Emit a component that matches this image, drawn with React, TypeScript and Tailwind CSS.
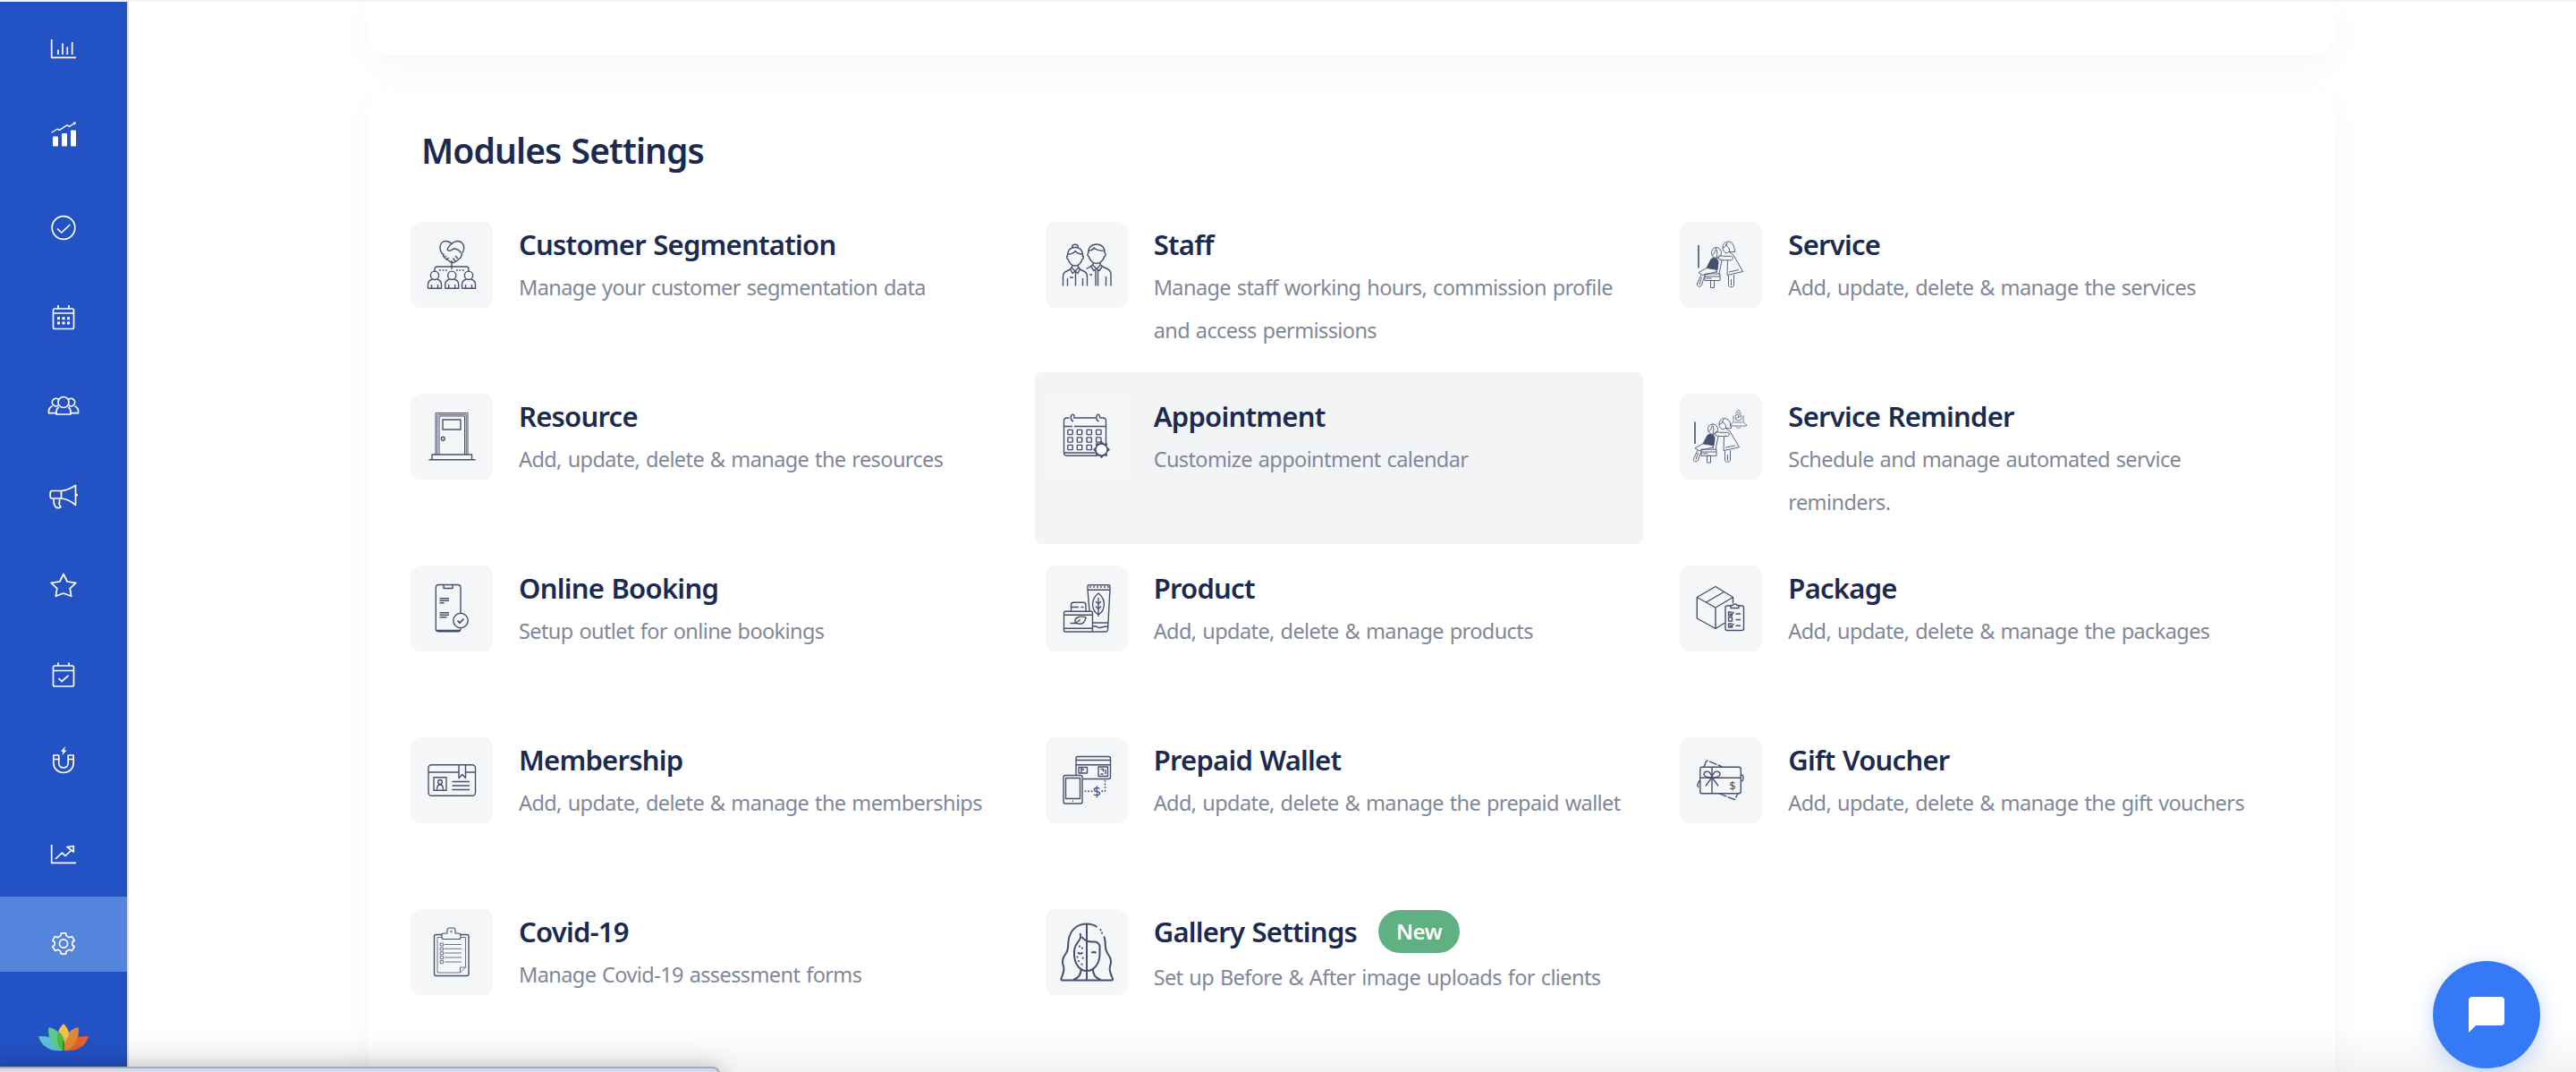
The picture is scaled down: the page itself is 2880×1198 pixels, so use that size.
import { type ReactNode } from "react";

interface ModuleItem {
  title: string;
  description: string;
  icon: ReactNode;
  badge?: string;
  active?: boolean;
}

interface NavItem {
  name: string;
  icon: ReactNode;
  active?: boolean;
}

const navItems: NavItem[] = [
  {
    name: "dashboard",
    icon: <path d="M4.7 7v20.3H32M12 24v-5.5M17 24V11.5M22.3 24v-8.5M27.7 24V10" />,
  },
  {
    name: "growth",
    icon: (
      <>
        <g fill="currentColor" stroke="none">
          <rect x="6" y="15.5" width="6" height="11" rx="0.8" />
          <rect x="16" y="12" width="6" height="14.5" rx="0.8" />
          <rect x="26" y="8.5" width="6" height="18" rx="0.8" />
          <path d="M28.5-.5h3.7l-1.5 3.2z" />
        </g>
        <path d="M4.5 11.2l6.5-4 2.5 1.2 8.5-5.5 2.5 1.5L30 1" strokeWidth="1.3" />
      </>
    ),
  },
  {
    name: "tasks",
    icon: (
      <>
        <circle cx="18" cy="17.5" r="12.8" />
        <path d="M11 18.5l4.8 4.5 9.5-9" />
      </>
    ),
  },
  {
    name: "calendar",
    icon: (
      <>
        <rect x="6.5" y="8" width="23" height="22.5" rx="1.8" />
        <path d="M6.5 13h23M12 4v4M24 4v4" />
        <path
          d="M11 17.2h3v3h-3zM16.5 17.2h3v3h-3zM22 17.2h3v3h-3zM11 22.6h3v3h-3zM16.5 22.6h3v3h-3zM22 22.6h3v3h-3z"
          fill="currentColor"
          stroke="none"
        />
      </>
    ),
  },
  {
    name: "clients",
    icon: (
      <>
        <circle cx="18" cy="12.5" r="6" />
        <path d="M12.8 18.2c-1.7.6-2.7 2.3-2.7 4.5V26h15.8v-3.3c0-2.2-1-3.9-2.7-4.5" />
        <path d="M12.2 16a4.3 4.3 0 1 1 .6-6.4M5.5 16.7c-2.5 1.2-4 3.5-4 6v2h8.6M23.8 16a4.3 4.3 0 1 0-.6-6.4M30.5 16.7c2.5 1.2 4 3.5 4 6v2h-8.6" />
      </>
    ),
  },
  {
    name: "marketing",
    icon: (
      <>
        <path d="M15.5 11.5H5.3c-1.300 0-2.100 1-2.100 2.500v3.700c0 1.500.8 2.300 2.100 2.300h10.200z" />
        <path d="M15.5 11.5c5.500 0 11-3 16-6v22c-5-4.500-10.500-7-16-7.500M31.500 14.700l1.800 1.400-1.800 1.600" />
        <path d="M7.2 20.5c-.4 4 .3 7 1.800 8.800 1.500 1.400 4.200 1.500 6 .3-2-2.200-2.200-4-1.500-6v-3.300" />
      </>
    ),
  },
  {
    name: "reviews",
    icon: <path d="M18 4.5l4.200 8.500 9.600 1.300-6.600 6.300 1.500 8.700-8.700-3.300-8.700 3.300 1.500-8.700-6.600-6.300L13.800 13z" />,
  },
  {
    name: "bookings",
    icon: (
      <>
        <rect x="6.5" y="7" width="23" height="23" rx="1.8" />
        <path d="M6.5 12.500h23M12 3.500V7M24 3.500V7M12.500 21l3.500 3.500 7.500-6.500" />
      </>
    ),
  },
  {
    name: "leads",
    icon: (
      <>
        <path d="M6.8 7h6v8.800c0 3.200 2.300 5.200 5.200 5.200s5.200-2 5.200-5.200V7h6v8.800c0 6-5 10.700-11.200 10.700S6.800 21.800 6.800 15.800zM6.800 11.500h6M23.200 11.500h6" />
        <path d="M19.500-2.500L15 3h2.500l-1 4 5-5.500h-2.700l1.200-4z" fill="currentColor" stroke="none" />
      </>
    ),
  },
  {
    name: "reports",
    icon: (
      <>
        <path d="M4.700 7v20.300H32" />
        <path d="M9 23l7.500-7 3.500 3.500 7-6.500M22 9.500l7.300-1v6.500z" />
      </>
    ),
  },
  {
    name: "settings",
    active: true,
    icon: (
      <>
        <circle cx="18" cy="17.5" r="4.6" />
        <path d="M14.8 8.800l.6-3h5.200l.6 3 3.200 1.900 3-1.200 2.800 4.500-2.400 2v3l2.400 2-2.800 4.500-3-1.200-3.200 1.900-.6 3h-5.200l-.6-3-3.200-1.900-3 1.200L5.800 21l2.400-2v-3l-2.400-2 2.800-4.500 3 1.200z" />
      </>
    ),
  },
];

function Stylist() {
  return (
    <g strokeWidth="0.9">
      <path d="M21 26v25.5" strokeWidth="1.6" />
      <ellipse cx="41" cy="34.5" rx="5.5" ry="6" />
      <path d="M40 29c2 3 2.500 6 1 11M36 38c2-2 3.500-4 4-7" />
      <path d="M35 41.500l3-1.500 4 2 1 4-1 7.500-12-2z" fill="currentColor" />
      <path d="M30 51.500l-9 5 4.500 3 16.500-4M24 59l-4.500 10c-.5 3.500 3.500 4.500 4.800 1.500l3.700-10M24.500 62l-2.500 8" />
      <path d="M28 58h17v7.500H28zM28 61h17M29.500 63h6M34.500 65.500h4v8h-4zM47 43l-3 15M43 43l-2 14" />
      <path d="M48 30c-.5-5 2.500-8 6-8 4.500 0 7 4 7.500 11.500h-6M48 30c1 4 5 6.500 7 3M48 29c3-1 4.500-3 5-6M51 25l4.500 5v4" />
      <path d="M45.500 37.500l3 .8h9c2.500.5 2.500 4 0 4.500H48l-4-1c-2-2-.8-4 1.500-4.300z" />
      <path d="M56 34l4 3 10.500 18.500-17.500 4L53.500 43M55 56l11-2.500M54.500 60v10.500c0 3 6 3 6 0V59M57.500 64v7" />
    </g>
  );
}

const modules: ModuleItem[] = [
  {
    title: "Customer Segmentation",
    description: "Manage your customer segmentation data",
    icon: (
      <>
        <path d="M37 37c-3-2.500-4.200-6-4-9 .3-4 3-6.500 6.300-6.500 3 0 5 1.200 6.700 3 1.700-1.800 3.700-3 6.700-3 4 0 7 3 7 7.500 0 2-.7 4-1.700 5.500" />
        <path d="M46 24.500c-3 2-4.500 4.500-4.800 7 2.500 1.500 5 .5 7-1.800 3.500.3 7.300 3 9.300 6.300L56 40l-3 2.500-3.500 2.300L46 46l-3.500-3-3-2-3-2.500.5-3M37 40l3-2M39.500 42.500l3-2.500M50 38l3 3M47.500 40.500l2.500 3.300M46 43v10" />
        <path d="M27 56v-3c0-2 1-3 3-3h32c2 0 3 1 3 3v3" />
        <path d="M32 54h9M51 54h9" strokeDasharray="1.8 1.7" />
        {[27, 46.2, 65].map((x) => (
          <g key={x}>
            <ellipse cx={x} cy="59.8" rx="4.6" ry="4.7" />
            <path d={`M${x - 7.5} 74.2v-4c0-3 2-5.5 5-6M${x + 2.5} 64.2c3 .5 5 3 5 6v4h-15M${x - 3.5} 74v-4M${x + 3.5} 74v-4`} />
          </g>
        ))}
      </>
    ),
  },
  {
    title: "Staff",
    description: "Manage staff working hours, commission profile and access permissions",
    icon: (
      <>
        <path d="M29.500 29c0-5 7-5 7 0M24.500 39c-.5-7 3-10.500 8.500-10.500S42 32 41.500 39M25 36c4 0 7-1.500 8-3.500 2 2.500 5 3.500 8.500 3.500M24.500 37.500c-1.500 1-1 4 .8 4.300.7 4 4 7.200 7.700 7.200s7-3.200 7.700-7.200c1.800-.3 2.300-3.300.8-4.300" />
        <path d="M48 35c-1-6 3-10 9-10s9.500 4 9 10M48.500 32c4-.3 5-1.500 5.500-3 3 2.500 7 3.500 11.500 3M48 34.500c-1.700 1-1.300 4 .5 4.500 1 4 4.500 7.500 8.500 7.500s7.500-3.500 8.500-7.500c1.800-.5 2.200-3.500.5-4.500" />
        <path d="M29.500 48.500v3L33 55l3.500-3.500v-3M29.500 50.500l-2 2 2.500 5 3-2.500 3 2.500 2.500-5-2-2M27.500 53l-5 2.500c-2 1-3 3-3 5.500v10.500M38.500 53l5 2.500c2 1 3 3 3 5.500v10.500M33.500 55.500v16M24.500 63v8.500M41.500 63v8.500M27 62h4" />
        <path d="M53 46v2.500l4 4 4-4V46M53 47.500l-2.500 2 3.500 5 3-2 3 2 3.500-5-2.500-2M50 50l-4.500 2.500M64 50l5 2.500c3 1.500 4 3.500 4 6v13M56 54v17.500M58.500 54v17.500M67.500 61v10.500M49 59h3" />
      </>
    ),
  },
  {
    title: "Service",
    description: "Add, update, delete & manage the services",
    icon: <Stylist />,
  },
  {
    title: "Resource",
    description: "Add, update, delete & manage the resources",
    icon: (
      <>
        <path d="M28 68V21.500h36V68M29.800 68V23.300h32.400V68M32 68V25h28.500v43" strokeWidth="1" />
        <path d="M36 29h20v11H36z" />
        <ellipse cx="36.3" cy="50.2" rx="1.9" ry="2" />
        <path d="M24 73.500V68h44.500v5.500M20.500 73.800h52" />
      </>
    ),
  },
  {
    title: "Appointment",
    description: "Customize appointment calendar",
    active: true,
    icon: (
      <>
        <path d="M31 27h25M60 27h4c2 0 3.500 1 3.500 3v25M26.500 27H24c-2.300 0-3.500 1.200-3.500 3.500V66c0 2 1 3.200 3.500 3.200h33M20.500 36.500H30M32 36.500h35.500M21 66h36" />
        <path d="M31 31c-2-.5-2.700-2-2.700-4 0-5 3.700-5 3.700-1M59.500 31c-2-.5-2.700-2-2.700-4 0-5 3.700-5 3.700-1" />
        {[43, 51.5, 60].map((y) =>
          [27.5, 38, 48.7, 59.3].map((x) =>
            x > 55 && y > 55 ? null : <rect key={`${x}-${y}`} x={x - 2.7} y={y - 2.6} width="5.4" height="5.2" rx="0.6" />
          )
        )}
        <path
          d="M62.500 52.800l2.500 2.700 4-.3-.3 4 3.300 3.300-3.300 3.300.3 4-4-.3-2.500 2.700-2.500-2.700-4 .3.300-4-3.300-3.300 3.300-3.300-.3-4 4 .3z"
          fill="currentColor"
          stroke="none"
        />
        <circle cx="62.5" cy="62.5" r="5.8" fill="#fff" stroke="none" />
      </>
    ),
  },
  {
    title: "Service Reminder",
    description: "Schedule and manage automated service reminders.",
    icon: (
      <>
        <g transform="translate(-4 6.5) scale(1 .96)">
          <Stylist />
        </g>
        <g strokeWidth="0.7">
          <path d="M60 24v8l-3.500 2.500V36h18v-1.500L71 32v-8M62 22.500c1-2 6-2 7 0M61 32h9M63 36.500c.5 2.500 4.500 2.500 5 0M63.500 20.500c0-3 4-3 4 0" />
          <circle cx="65.5" cy="26.5" r="3.6" />
          <path d="M63 28l5-3M65.500 24v3" />
        </g>
      </>
    ),
  },
  {
    title: "Online Booking",
    description: "Setup outlet for online bookings",
    icon: (
      <>
        <path d="M56 53V25c0-2.500-1-3.500-3-3.500H31.500c-2 0-3.200 1-3.200 3.500v45.500c0 2.300 1.200 3.300 3.200 3.300H53c2 0 3-1 3-3.300" />
        <path d="M37 22v3.500h10V22M28.500 72.500H56" />
        <path d="M32.500 36.800H43M32.500 39.300H43M32.500 41.800h5M32.500 52.800H43M32.500 55.300H43M32.500 57.800h8" />
        <circle cx="56" cy="61.5" r="8.2" />
        <path d="M52.500 61.500l2.500 2.700 4.500-4.700" strokeWidth="1.8" />
      </>
    ),
  },
  {
    title: "Product",
    description: "Add, update, delete & manage products",
    icon: (
      <>
        <path d="M49 51l-2-24.500v-3c0-1 .5-1.700 1.500-1.700h22c1 0 1.500.7 1.500 1.700v3L69.500 72c-.2 1.500-1 2-2 2H52M47 27.300h25M50 25v-2M54 25v-2M58 25v-2M62 25v-2M66 25v-2M70 25v-2M53 64h17M53 68c3-1 4 0 6 1.300 3 1 4-1.300 10.500-1.300" />
        <path d="M59 31c-9 7-8 19 0 24 8-5 9-17 0-24zM59 36v21M59 43l-3-3M59 43l3-3M59 48.500l-3-3M59 48.500l3-3" />
        <path d="M28.500 51v-7c0-1.700 1-2.700 2.700-2.700h11c1.700 0 2.700 1 2.700 2.700v7M29 46.500h8M39.500 46.500h3" />
        <rect x="20.5" y="51.2" width="32" height="22.8" rx="1.5" />
        <path d="M20.500 55.200h32M20.500 70.200h32M27.500 64.500h7c7 2.500 10-2 10.500-6.500-6-2-13-.5-12 5.500M33 64.500l6-4" />
      </>
    ),
  },
  {
    title: "Package",
    description: "Add, update, delete & manage the packages",
    icon: (
      <>
        <path d="M40 23.500l19.500 12L40 47 19.300 35.500zM19.300 35.500V59L40 70.500V47M40 70.500L50.500 64M59.500 35.500V42M49.500 29.500l-20 11.500" />
        <rect x="51" y="45" width="20.5" height="27.5" rx="2" />
        <path d="M57 47.500v-3h2c.5-2 4.500-2 5 0h2v3z" fill="#f4f6f8" />
        <path d="M58.500 52h-4v4h4v-1.500M56 53.500l1.500 1.500 3-3M54.500 58h4v4h-4zM58.500 65h-4v4h4v-1.500M56 66.500l1.500 1.500 3-3M62.500 54H68M62.500 60.500H68M62.500 67.300H68" />
      </>
    ),
  },
  {
    title: "Membership",
    description: "Add, update, delete & manage the memberships",
    icon: (
      <>
        <rect x="20" y="30.8" width="52.5" height="34.5" rx="3.5" />
        <path d="M20 39h34M61.500 39h11M54 31v14.500l3.800-4 3.700 4V31M46.500 49.500H66M46.500 54H66M46.500 58.500H66" />
        <rect x="26" y="44.8" width="14" height="14.5" />
        <ellipse cx="33" cy="50" rx="2.3" ry="2.5" />
        <path d="M29.500 58.500c0-3.500 1-5.500 3.500-5.500s3.500 2 3.500 5.500" />
      </>
    ),
  },
  {
    title: "Prepaid Wallet",
    description: "Add, update, delete & manage the prepaid wallet",
    icon: (
      <>
        <path d="M34 42V23.500c0-1.300.7-2 2-2h34.500c1.300 0 2 .7 2 2v21c0 1.300-.7 2-2 2h-29M34 25.500h38.500M34 30.800h38.500" />
        <path d="M37 33.500h9.500V40H37zM40 33.500V40M43 36h-3M59 33h10.500v10.500H59zM61.500 35.500h3v3M67 36v5M61.500 41h3" />
        <rect x="20" y="42.5" width="21" height="31.5" rx="2" />
        <path d="M22.500 45.500h16v23h-16zM30 71.300h1" />
        <path d="M43.500 60.200h9M62.500 60.200h4V47" strokeDasharray="1.8 1.8" />
        <text x="57.3" y="65.5" textAnchor="middle" fontSize="16" fill="currentColor" stroke="none">
          $
        </text>
      </>
    ),
  },
  {
    title: "Gift Voucher",
    description: "Add, update, delete & manage the gift vouchers",
    icon: (
      <>
        <rect x="22.8" y="33.2" width="45.5" height="29.5" rx="2" />
        <path d="M22.800 45.300h45.500M36 33.200v29.500" />
        <path d="M27 33l2.500-6c.5-1 1.500-1 2.500-.6L47.500 33M44 62.700l16 6.500c1 .4 2 .2 2.300-.8l2.500-5.700M22.500 48c-3 4-4 7 0 8.500M68.500 42c4 .5 3 5 0 9" strokeDasharray="9 1.5" />
        <path d="M36 45c-4 0-9-1-9-4s5-4 7-1c1.200 1.700 2 3 2 5zM36 45c4 0 9-1 9-4s-5-4-7-1c-1.200 1.700-2 3-2 5zM35 46c-2 3-4 5-6 8.500M37 46c2 3 4 5 6 8.500" />
        <text x="59" y="58.5" textAnchor="middle" fontSize="13" fill="currentColor" stroke="none">
          $
        </text>
      </>
    ),
  },
  {
    title: "Covid-19",
    description: "Manage Covid-19 assessment forms",
    icon: (
      <>
        <path d="M35 28.500h-6.500c-1.300 0-2 .7-2 2v42c0 1.300.7 2 2 2H63c1.300 0 2-.7 2-2v-42c0-1.300-.7-2-2-2h-7" />
        <g strokeWidth="0.8">
          <path d="M35 31.500h-5V71h25.500l6-6V31.500H56M55.500 71v-6h6M38 39.500h19M38 44.300h19M38 49h19M38 54h19M38 59h19" />
          <path d="M33.200 38h3.500v3h-3.500zM33.200 43h3.500v3h-3.500zM33.200 47.800h3.500v3h-3.500zM33.200 52.700h3.500v3h-3.500zM33.200 57.600h3.500v3h-3.500z" />
          <path d="M37 33.500c-1.300 0-2-.7-2-2v-2c0-1.500 1-2.500 2.500-2.500H41v-3c0-2 1-3 2.500-3h4c1.500 0 2.500 1 2.500 3v3h3.500c1.500 0 2.500 1 2.500 2.500v2c0 1.300-.7 2-2 2z" strokeWidth="1.1" />
          <circle cx="45.5" cy="25" r="0.9" />
        </g>
      </>
    ),
  },
  {
    title: "Gallery Settings",
    description: "Set up Before & After image uploads for clients",
    badge: "New",
    icon: (
      <g strokeWidth="2">
        <path d="M57.500 20c-3-2.200-7-3.500-11.500-3.500-12 0-19 8-20.500 19-.7 5 .5 9-2.500 13.500-3.500 5-5.500 9-3 15 1.500 4-.5 8-2.500 13.500-.5 1.200 0 2 1.200 2h55c1.200 0 1.700-.8 1.200-2C72.500 72 70.500 68 72 64c2.500-6 .5-10-3-15-3-4.500-1.800-8-2.500-13-.2-2-.6-4-1.200-5.700" />
        <path d="M61.500 23v.2M63 26.500v.3" strokeLinecap="round" />
        <path d="M46 16.500v63" />
        <path d="M38.500 27c1.500 3 0 7-2.500 10-3.500 4-4.500 8-4 14.500C32.500 61 38 69 46 69s14-8 14.500-17.500V41c-1-3-3-4.500-6-4.500-6 .5-11-1-14-5.500M39.500 66.500c.5 7-3 10.500-8.500 12.500M53 66.500c-.5 7 3 10.500 8.500 12.500" />
        <path d="M36 48.500c1.500 1.500 4 1.500 5.500 0M51.500 49c1-1.200 4-1.200 5 0" />
        <path d="M38 41.500v.3M41 43.500v.3M35.500 53.500v.3M41.500 54.500v.3M37 58v.3M40.500 61.500v.3" strokeLinecap="round" />
      </g>
    ),
  },
];

function Lotus() {
  return (
    <svg width="58" height="34" viewBox="0 0 58 34">
      <path d="M29 31C14 33 4 26 1 15c14-1 25 4 28 16z" fill="#5bc0d8" />
      <path d="M29 31C44 33 54 26 57 15c-14-1-25 4-28 16z" fill="#e5602e" />
      <path d="M29 31C19 31 10 17 12.500 5 23 7 30 16 29 31z" fill="#5fc98b" />
      <path d="M29 31C39 31 48 17 45.500 5 35 7 28 16 29 31z" fill="#df8836" />
      <path d="M29 1c6 6 7 11 5 15-2 3-4 6-5 10-1-4-3-7-5-10-2-4-1-9 5-15z" fill="#f3c048" />
      <path d="M23.500 10c6 4 8 12 5.500 21-7-4-9-13-5.500-21z" fill="#55b83c" />
      <path d="M28 20h2v11h-2z" fill="#2f8f3c" />
    </svg>
  );
}

function Sidebar() {
  return (
    <aside className="flex h-full w-36 shrink-0 flex-col border-r-2 border-[#dcdfea] bg-[#2252c4] text-white">
      {navItems.map((item) => (
        <div
          key={item.name}
          className={`mb-4 flex h-[84px] shrink-0 justify-center pt-[35px] ${item.active ? "bg-[#5584dc]" : ""}`}
        >
          <svg width="36" height="36" viewBox="0 0 36 36" fill="none" stroke="currentColor" strokeWidth="1.7" strokeLinejoin="round" overflow="visible">
            {item.icon}
          </svg>
        </div>
      ))}
      <div className="mt-[41px] flex justify-center">
        <Lotus />
      </div>
    </aside>
  );
}

function ModuleCard({ item }: { item: ModuleItem }) {
  return (
    <div className={`flex h-48 rounded-lg px-3 pt-6 ${item.active ? "bg-[#f3f4f6]" : ""}`}>
      <div className="h-24 w-[92px] shrink-0 rounded-xl bg-[#f4f6f8] text-[#46516f]">
        <svg width="92" height="96" viewBox="0 0 92 96" fill="none" stroke="currentColor" strokeWidth="1.4" strokeLinejoin="round">
          {item.icon}
        </svg>
      </div>
      <div className="ml-[29px] min-w-0 flex-1">
        <div className="flex h-[50px] items-center">
          <h3 className="text-[31px] leading-[50px] font-semibold tracking-[-0.75px] text-[#1b2a4e] [word-spacing:1px]">
            {item.title}
          </h3>
          {item.badge && (
            <span className="ml-6 flex h-12 items-center rounded-full bg-[#5fb181] px-5 text-[24px] font-semibold tracking-[-0.5px] text-white">
              {item.badge}
            </span>
          )}
        </div>
        <p
          className={`text-[23.5px] leading-[48px] tracking-[-0.6px] text-[#808899] [word-spacing:1.3px] ${
            item.badge ? "pt-[2px]" : "-mt-px"
          }`}
        >
          {item.description}
        </p>
      </div>
    </div>
  );
}

export default function App() {
  return (
    <div className="relative flex h-[1198px] w-[2880px] flex-col overflow-hidden bg-white font-['Noto_Sans','Open_Sans',sans-serif]">
      <div className="h-0.5 w-full shrink-0 bg-[#f3f3f3]" />
      <div className="flex min-h-0 flex-1">
        <Sidebar />
        <main className="flex flex-1 flex-col overflow-hidden pl-[267px]">
          <section className="h-[60px] w-[2200px] shrink-0 rounded-b-3xl bg-white shadow-[0_12px_40px_rgba(0,0,0,0.035)]" />
          <section className="mt-10 h-[1400px] w-[2200px] shrink-0 rounded-3xl bg-white px-9 pt-9 shadow-[0_12px_40px_rgba(0,0,0,0.035)]">
            <h2 className="pl-6 text-[39px] leading-[60px] font-semibold tracking-[-0.9px] text-[#1b2a4e] [word-spacing:2px]">
              Modules Settings
            </h2>
            <div className="mt-[26px] grid w-[2100px] grid-cols-3 gap-x-[29px]">
              {modules.map((item) => (
                <ModuleCard key={item.title} item={item} />
              ))}
            </div>
          </section>
        </main>
      </div>

      <div className="pointer-events-none absolute inset-x-0 bottom-0 h-12 bg-linear-to-b from-transparent to-black/5" />
      <div className="absolute top-[1192px] -left-1 h-5 w-[809px] rounded-tr-lg border-2 border-[#a9a9ab] bg-[#d3daee] shadow-[0_0_24px_rgba(0,0,0,0.25)]" />

      <button className="absolute top-[1074px] left-[2720px] flex size-[120px] items-center justify-center rounded-full bg-[#3579f6] shadow-[0_6px_24px_rgba(53,121,246,0.3)]">
        <svg width="40" height="40" viewBox="0 0 40 40" fill="#fff">
          <path d="M4 0h32a4 4 0 0 1 4 4v24a4 4 0 0 1-4 4H8l-8 8V4a4 4 0 0 1 4-4z" />
        </svg>
      </button>
    </div>
  );
}
